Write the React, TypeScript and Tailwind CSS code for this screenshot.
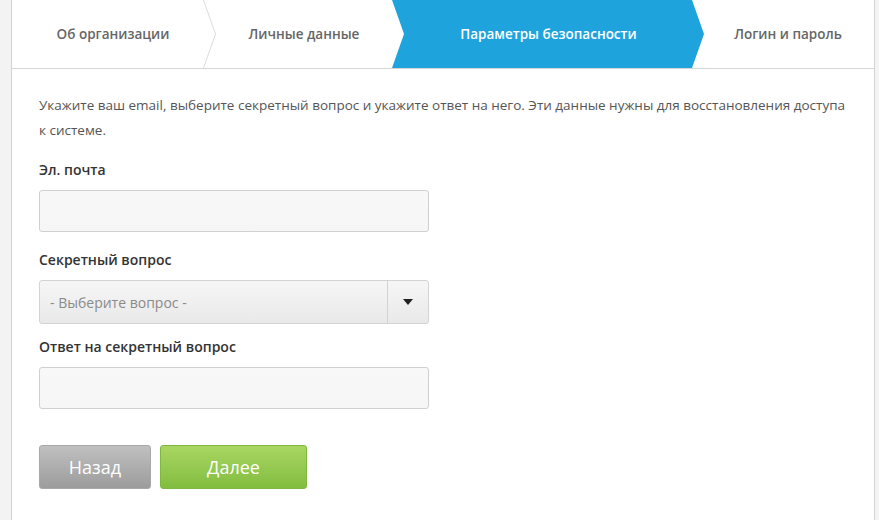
const font = { fontFamily: '"Open Sans", "Noto Sans", sans-serif' };

function Chevron() {
  return (
    <svg
      className="absolute right-[-12px] top-0 z-10 h-[68px] w-[13px]"
      viewBox="0 0 13 68"
      fill="none"
    >
      <path d="M0.5 0 L12.5 34 L0.5 68" stroke="#dcdcdc" strokeWidth="1" />
    </svg>
  );
}

function Steps() {
  return (
    <div className="flex h-[69px] border-b border-[#d6d6d6] text-[13.5px] font-semibold text-[#666]">
      <div className="relative flex w-[192px] items-center justify-center pl-[10px]">
        Об организации
        <Chevron />
      </div>
      <div className="relative flex w-[188px] items-center justify-center pl-[12px]">
        Личные данные
      </div>
      <div className="relative z-20 -mr-[12px] flex w-[312px] items-center justify-center bg-[#1fa3dd] pl-[1px] text-white [clip-path:polygon(0_0,300px_0,312px_50%,300px_100%,0_100%,12px_50%)]">
        Параметры безопасности
      </div>
      <div className="flex flex-1 items-center justify-center pl-[10px]">
        Логин и пароль
      </div>
    </div>
  );
}

function TextInput() {
  return (
    <div className="h-[42px] w-[390px] rounded-[3px] border border-[#d0d0d0] bg-gradient-to-b from-[#f8f8f8] to-[#f6f6f6]" />
  );
}

export default function App() {
  return (
    <div className="flex min-h-[520px] bg-[#f3f3f3]" style={font}>
      <div className="ml-[11px] flex w-[864px] flex-col border-x border-[#d4d4d4] bg-white">
        <Steps />

        <div className="px-[27px] pt-[24px]">
          <p className="text-[13.5px] leading-[25px] text-[#555]">
            Укажите ваш email, выберите секретный вопрос и укажите ответ на него. Эти данные нужны для восстановления доступа к системе.
          </p>

          <label className="mt-[17px] block text-[14px] font-semibold leading-[20px] text-[#333]">
            Эл. почта
          </label>
          <div className="mt-[10px]">
            <TextInput />
          </div>

          <label className="mt-[18px] block text-[14px] font-semibold leading-[20px] text-[#333]">
            Секретный вопрос
          </label>
          <div className="mt-[10px] flex h-[44px] w-[390px] overflow-hidden rounded-[3px] border border-[#d3d3d3] bg-gradient-to-b from-[#f6f6f6] to-[#e9e9e9]">
            <div className="flex flex-1 items-center pl-[10px] text-[14px] text-[#8a8a8a]">
              - Выберите вопрос -
            </div>
            <div className="flex w-[41px] items-center justify-center border-l border-[#d3d3d3]">
              <svg width="10" height="6" viewBox="0 0 10 6">
                <path d="M0 0 H10 L5 6 Z" fill="#222" />
              </svg>
            </div>
          </div>

          <label className="mt-[13px] block text-[14px] font-semibold leading-[20px] text-[#333]">
            Ответ на секретный вопрос
          </label>
          <div className="mt-[10px]">
            <TextInput />
          </div>

          <div className="mt-[36px] flex gap-[9px]">
            <button className="h-[44px] w-[112px] rounded-[3px] border border-[#a8a8a8] bg-gradient-to-b from-[#c0c0c0] to-[#9c9c9c] text-[18px] text-white">
              Назад
            </button>
            <button className="h-[44px] w-[147px] rounded-[3px] border border-[#7fb83e] bg-gradient-to-b from-[#a9d662] to-[#82bd3f] text-[18px] text-white">
              Далее
            </button>
          </div>
        </div>
      </div>
    </div>
  );
}
